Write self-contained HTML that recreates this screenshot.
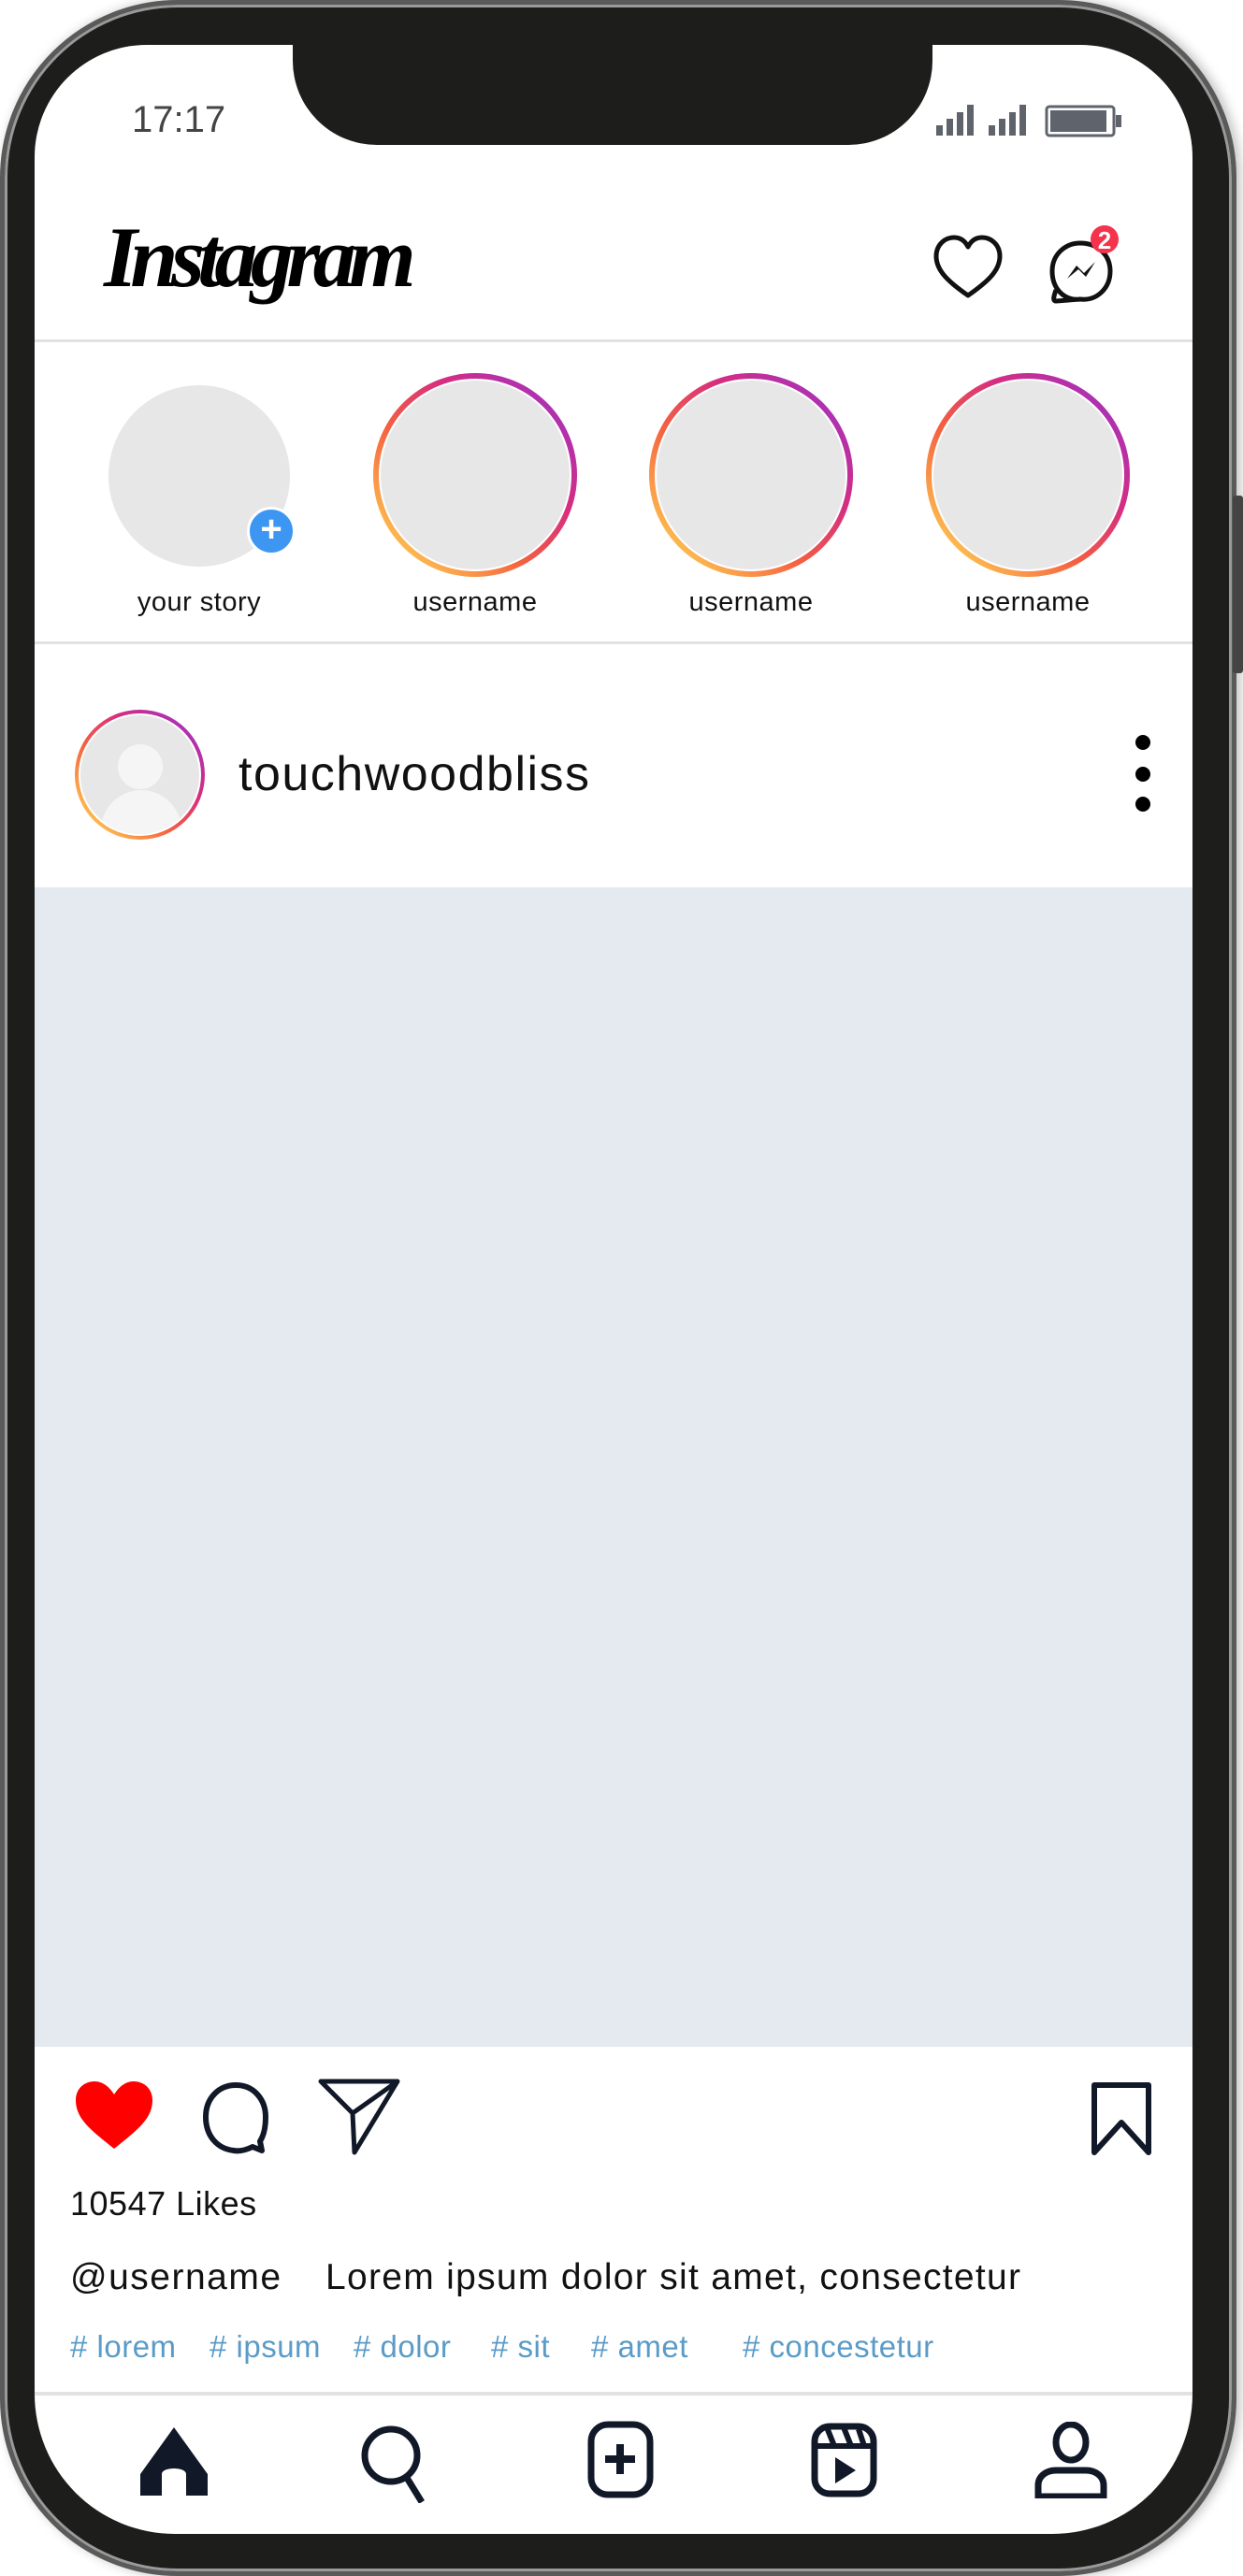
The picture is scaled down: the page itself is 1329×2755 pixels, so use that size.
<!DOCTYPE html>
<html><head><meta charset="utf-8"><style>
*{margin:0;padding:0;box-sizing:border-box}
body{width:1329px;height:2755px;background:#fff;position:relative;overflow:hidden;font-family:"Liberation Sans",sans-serif;color:#111}
.abs{position:absolute}
#frame{left:0;top:0;width:1322px;height:2755px;border-radius:190px;background:#1d1d1b;border:5px solid #5a5a5a;box-shadow:0 0 0 3px #9a9a9a inset, 4px 0 12px rgba(0,0,0,.25)}
#screen{left:37px;top:48px;width:1238px;height:2662px;background:#fff;border-radius:120px 120px 150px 150px;overflow:hidden}
#notch{left:276px;top:0;width:684px;height:107px;background:#1d1d1b;border-radius:0 0 90px 90px}
.hr{position:absolute;left:0;width:1238px;height:3px;background:#e2e2e2}
.ring{position:absolute;width:218px;height:218px;border-radius:50%;background:linear-gradient(45deg,#fec851 10%,#f56040 40%,#d62d80 65%,#9b33c9 95%);padding:6px}
.ring div{width:100%;height:100%;border-radius:50%;background:#e7e7e7;border:2px solid #fff}
.lbl{position:absolute;font-size:29px;text-align:center;width:220px;color:#111;letter-spacing:0.5px}
.tag{position:absolute;top:2443px;font-size:33px;color:#5a9bc7;letter-spacing:0.5px}
</style></head><body>
<div id="frame" class="abs"></div>
<div class="abs" style="left:1318px;top:530px;width:11px;height:190px;background:#444;border-radius:3px"></div>
<div id="screen" class="abs">
 <div id="notch" class="abs"></div>
 <div class="abs" style="left:104px;top:58px;font-size:40px;color:#444">17:17</div>
 <svg class="abs" style="left:964px;top:62px" width="240" height="40">
  <g fill="#5f636b"><rect x="0" y="24" width="7" height="11"/><rect x="11" y="17" width="7" height="18"/><rect x="22" y="10" width="7" height="25"/><rect x="33" y="2" width="7" height="33"/>
  <rect x="56" y="24" width="7" height="11"/><rect x="67" y="17" width="7" height="18"/><rect x="78" y="10" width="7" height="25"/><rect x="89" y="2" width="7" height="33"/>
  <rect x="118" y="4" width="72" height="31" rx="3" fill="none" stroke="#5f636b" stroke-width="3"/><rect x="122" y="8" width="60" height="23"/><rect x="192" y="13" width="6" height="13"/></g>
 </svg>
 <div class="abs" style="left:74px;top:174px;font-family:'Liberation Serif',serif;font-style:italic;font-weight:bold;font-size:92px;letter-spacing:-7.5px;color:#000">Instagram</div>
 <svg class="abs" style="left:958px;top:200px" width="80" height="80" viewBox="0 0 80 80"><path d="M40 68 C20 54 6 42 6 26 C6 14 15 6 25 6 C32 6 37 10 40 16 C43 10 48 6 55 6 C65 6 74 14 74 26 C74 42 60 54 40 68Z" fill="none" stroke="#111" stroke-width="5" stroke-linejoin="round"/></svg>
 <svg class="abs" style="left:1078px;top:190px" width="100" height="90" viewBox="0 0 100 90"><path d="M40 82 C22 84 10 70 10 52 C10 34 24 22 40 22 C58 22 72 34 72 52 C72 70 58 84 40 82 L14 84 C10 84 12 78 14 72" fill="none" stroke="#111" stroke-width="5" stroke-linejoin="round"/><path d="M26 60 L36 46 L44 54 L56 42 L46 58 L38 50Z" fill="#111"/><circle cx="66" cy="18" r="15" fill="#f5334d"/><text x="66" y="28" text-anchor="middle" font-size="26" font-weight="bold" fill="#fff" font-family="Liberation Sans">2</text></svg>
 <div class="hr" style="top:315px"></div>
 <div class="abs" style="left:79px;top:364px;width:194px;height:194px;border-radius:50%;background:#e7e7e7"></div>
 <div class="abs" style="left:227px;top:494px;width:52px;height:52px;border-radius:50%;background:#3d97f2;border:3px solid #fff;color:#fff;font-size:40px;line-height:42px;text-align:center;font-weight:bold">+</div>
 <div class="ring" style="left:362px;top:351px"><div></div></div>
 <div class="ring" style="left:657px;top:351px"><div></div></div>
 <div class="ring" style="left:953px;top:351px"><div></div></div>
 <div class="lbl" style="left:66px;top:580px">your story</div>
 <div class="lbl" style="left:361px;top:580px">username</div>
 <div class="lbl" style="left:656px;top:580px">username</div>
 <div class="lbl" style="left:952px;top:580px">username</div>
 <div class="hr" style="top:638px"></div>
 <div class="ring" style="left:43px;top:711px;width:139px;height:139px;padding:4px"><div style="position:relative;overflow:hidden"><span style="position:absolute;left:40px;top:31px;width:48px;height:48px;border-radius:50%;background:#f5f5f5"></span><span style="position:absolute;left:22px;top:80px;width:86px;height:70px;border-radius:43px 43px 0 0;background:#f5f5f5"></span></div></div>
 <div class="abs" style="left:218px;top:750px;font-size:52px;letter-spacing:1.5px;color:#111">touchwoodbliss</div>
 <div class="abs" style="left:1177px;top:738px;width:16px;height:16px;border-radius:50%;background:#000"></div>
 <div class="abs" style="left:1177px;top:772px;width:16px;height:16px;border-radius:50%;background:#000"></div>
 <div class="abs" style="left:1177px;top:804px;width:16px;height:16px;border-radius:50%;background:#000"></div>
 <div class="abs" style="left:0;top:901px;width:1238px;height:1240px;background:#e5e9f0"></div>
 <svg class="abs" style="left:40px;top:2174px" width="90" height="80" viewBox="0 0 90 80"><path d="M45 76 C20 56 4 44 4 24 C4 12 13 4 24 4 C33 4 40 10 45 18 C50 10 57 4 66 4 C77 4 86 12 86 24 C86 44 70 56 45 76Z" fill="#fe0000"/></svg>
 <svg class="abs" style="left:175px;top:2174px" width="85" height="85" viewBox="0 0 85 85"><path d="M58 74 C50 78 44 79 38 78 C20 76 8 62 8 42 C8 22 22 8 40 8 C60 8 72 24 72 42 C72 54 70 62 66 68 L68 78 Z" fill="none" stroke="#111827" stroke-width="6" stroke-linejoin="round"/></svg>
 <svg class="abs" style="left:300px;top:2170px" width="95" height="90" viewBox="0 0 95 90"><path d="M6 8 L88 8 L42 84 L40 42 Z M40 42 L88 8" fill="none" stroke="#111827" stroke-width="5" stroke-linejoin="round"/></svg>
 <svg class="abs" style="left:1127px;top:2176px" width="70" height="84" viewBox="0 0 70 84"><path d="M6 6 H64 V78 L35 46 L6 78 Z" fill="none" stroke="#111827" stroke-width="6" stroke-linejoin="round"/></svg>
 <div class="abs" style="left:38px;top:2288px;font-size:36px;letter-spacing:0.5px">10547 Likes</div>
 <div class="abs" style="left:38px;top:2366px;font-size:39px;letter-spacing:1.5px">@username</div>
 <div class="abs" style="left:311px;top:2366px;font-size:39px;letter-spacing:1.3px">Lorem ipsum dolor sit amet, consectetur</div>
 <div class="tag" style="left:38px"># lorem</div>
 <div class="tag" style="left:187px"># ipsum</div>
 <div class="tag" style="left:341px"># dolor</div>
 <div class="tag" style="left:488px"># sit</div>
 <div class="tag" style="left:595px"># amet</div>
 <div class="tag" style="left:757px"># concestetur</div>
 <div class="hr" style="top:2510px;height:4px"></div>
 <svg class="abs" style="left:112px;top:2546px" width="75" height="75" viewBox="0 0 75 75"><path d="M37 2 L73 52 V75 H50 V52 C50 44 24 44 24 52 V75 H1 V52 Z" fill="#111827"/></svg>
 <svg class="abs" style="left:348px;top:2544px" width="80" height="85" viewBox="0 0 80 85"><circle cx="33" cy="34" r="28" fill="none" stroke="#111827" stroke-width="7"/><path d="M50 58 L66 84" stroke="#111827" stroke-width="7"/></svg>
 <svg class="abs" style="left:590px;top:2540px" width="75" height="85" viewBox="0 0 75 85"><rect x="5" y="5" width="63" height="75" rx="18" fill="none" stroke="#111827" stroke-width="7"/><path d="M36 26 V58 M20 42 H52" stroke="#111827" stroke-width="8"/></svg>
 <svg class="abs" style="left:829px;top:2542px" width="75" height="82" viewBox="0 0 75 82"><rect x="5" y="5" width="63" height="72" rx="16" fill="none" stroke="#111827" stroke-width="7"/><path d="M5 26 H68 M18 6 L26 26 M36 6 L44 26 M52 8 L58 26" stroke="#111827" stroke-width="6"/><path d="M27 38 L49 52 L27 66 Z" fill="#111827"/></svg>
 <svg class="abs" style="left:1068px;top:2542px" width="80" height="82" viewBox="0 0 80 82"><ellipse cx="40" cy="22" rx="16" ry="19" fill="none" stroke="#111827" stroke-width="7"/><path d="M5 80 V68 C5 58 14 52 24 52 H56 C66 52 75 58 75 68 V80 Z" fill="none" stroke="#111827" stroke-width="7"/></svg>
</div>
</body></html>
